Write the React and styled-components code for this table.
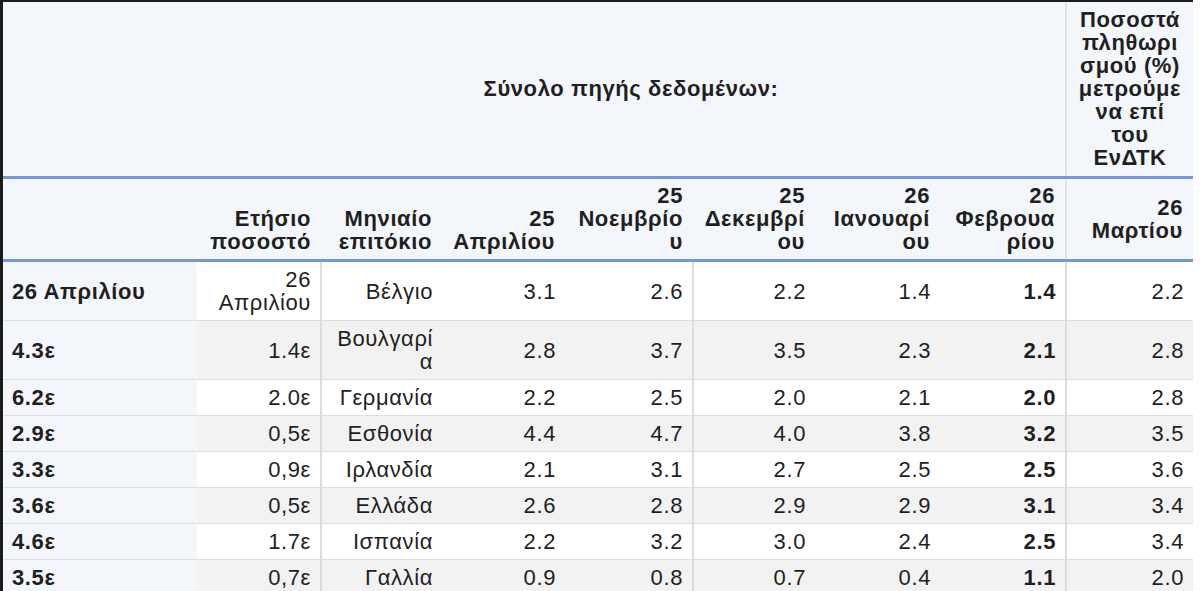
import React from "react";
import styled, { createGlobalStyle } from "styled-components";

const Global = createGlobalStyle`
  html, body { margin: 0; padding: 0; background: #ffffff; }
  body { font-family: "Liberation Sans", Arial, sans-serif; color: #1f1f1f; }
`;

const Frame = styled.div`
  border-left: 3px solid #1c1c1c;
  border-top: 2px solid #1c1c1c;
  width: 1190px;
`;

const Table = styled.table`
  border-collapse: collapse;
  table-layout: fixed;
  width: 1190px;
  font-size: 22px;
  letter-spacing: 0.6px;
  line-height: 23px;
`;

const HeadRow = styled.tr`
  background: #f3f6fb;
  border-bottom: 3px solid #7b97cb;
`;

const HeadCell = styled.th`
  font-weight: 700;
  color: #1f1f1f;
  padding: ${(p) => (p.$tall ? "6px 4px 7px" : "5px 10px 6px")};
  text-align: ${(p) => p.$align || "right"};
  vertical-align: ${(p) => p.$valign || "bottom"};
  white-space: nowrap;
  border-right: ${(p) => (p.$divider ? "2px solid #dfe3ea" : "none")};
`;

const BodyRow = styled.tr`
  background: ${(p) => (p.$alt ? "#f2f2f2" : "#ffffff")};
  border-bottom: 1px solid #dedede;
`;

const RowHead = styled.th`
  background: #f3f6fb;
  font-weight: 700;
  text-align: left;
  padding: 6px 10px 6px 9px;
  white-space: nowrap;
  vertical-align: middle;
`;

const Cell = styled.td`
  text-align: right;
  padding: 6px 9px 6px 9px;
  white-space: nowrap;
  vertical-align: middle;
  font-weight: ${(p) => (p.$bold ? 700 : 400)};
  border-right: ${(p) => (p.$divider ? "2px solid #dcdcdc" : "none")};
`;

const widths = [194, 124, 121, 123, 128, 122, 125, 126, 127];

const Lines = ({ parts }) =>
  parts.map((t, i) => (
    <React.Fragment key={i}>
      {i > 0 && <br />}
      {t}
    </React.Fragment>
  ));

const colHeads = [
  ["Ετήσιο", "ποσοστό"],
  ["Μηνιαίο", "επιτόκιο"],
  ["25", "Απριλίου"],
  ["25", "Νοεμβρίο", "υ"],
  ["25", "Δεκεμβρί", "ου"],
  ["26", "Ιανουαρί", "ου"],
  ["26", "Φεβρουα", "ρίου"],
  ["26", "Μαρτίου"],
];

const rows = [
  { h: "26 Απριλίου", a: ["26", "Απριλίου"], c: ["Βέλγιο"], v: ["3.1", "2.6", "2.2", "1.4", "1.4", "2.2"] },
  { h: "4.3ε", a: ["1.4ε"], c: ["Βουλγαρί", "α"], v: ["2.8", "3.7", "3.5", "2.3", "2.1", "2.8"] },
  { h: "6.2ε", a: ["2.0ε"], c: ["Γερμανία"], v: ["2.2", "2.5", "2.0", "2.1", "2.0", "2.8"] },
  { h: "2.9ε", a: ["0,5ε"], c: ["Εσθονία"], v: ["4.4", "4.7", "4.0", "3.8", "3.2", "3.5"] },
  { h: "3.3ε", a: ["0,9ε"], c: ["Ιρλανδία"], v: ["2.1", "3.1", "2.7", "2.5", "2.5", "3.6"] },
  { h: "3.6ε", a: ["0,5ε"], c: ["Ελλάδα"], v: ["2.6", "2.8", "2.9", "2.9", "3.1", "3.4"] },
  { h: "4.6ε", a: ["1.7ε"], c: ["Ισπανία"], v: ["2.2", "3.2", "3.0", "2.4", "2.5", "3.4"] },
  { h: "3.5ε", a: ["0,7ε"], c: ["Γαλλία"], v: ["0.9", "0.8", "0.7", "0.4", "1.1", "2.0"] },
];

export default function App() {
  return (
    <>
      <Global />
      <Frame>
        <Table>
          <colgroup>
            {widths.map((w, i) => (
              <col key={i} style={{ width: w }} />
            ))}
          </colgroup>
          <thead>
            <HeadRow>
              <HeadCell $tall />
              <HeadCell $tall colSpan={7} $align="center" $valign="middle" $divider>
                Σύνολο πηγής δεδομένων:
              </HeadCell>
              <HeadCell $tall $align="center" $valign="middle">
                <Lines parts={["Ποσοστά", "πληθωρι", "σμού (%)", "μετρούμε", "να επί", "του", "ΕνΔΤΚ"]} />
              </HeadCell>
            </HeadRow>
            <HeadRow>
              <HeadCell />
              {colHeads.map((p, i) => (
                <HeadCell key={i} $divider={i === 6} $valign={i === 7 ? "middle" : "bottom"}>
                  <Lines parts={p} />
                </HeadCell>
              ))}
            </HeadRow>
          </thead>
          <tbody>
            {rows.map((r, ri) => (
              <BodyRow key={ri} $alt={ri % 2 === 1}>
                <RowHead>{r.h}</RowHead>
                <Cell $divider>
                  <Lines parts={r.a} />
                </Cell>
                <Cell>
                  <Lines parts={r.c} />
                </Cell>
                {r.v.map((v, vi) => (
                  <Cell key={vi} $bold={vi === 4} $divider={vi === 1 || vi === 4}>
                    {v}
                  </Cell>
                ))}
              </BodyRow>
            ))}
          </tbody>
        </Table>
      </Frame>
    </>
  );
}
